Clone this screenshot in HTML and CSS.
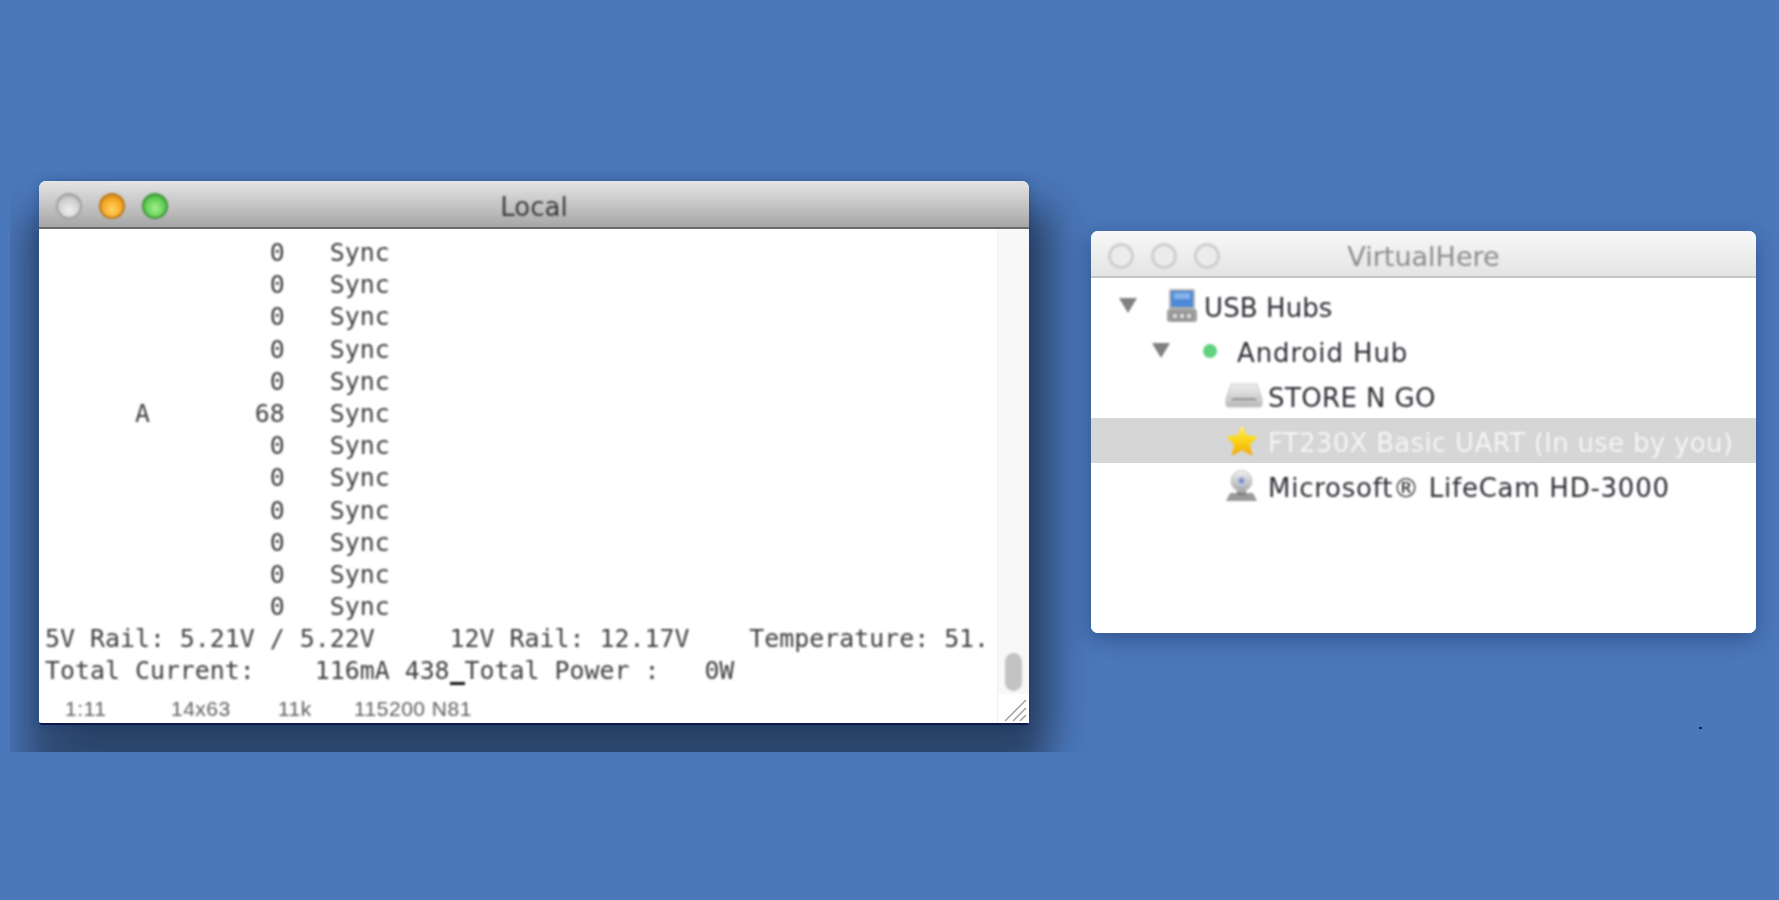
FILE: index.html
```html
<!DOCTYPE html>
<html lang="en">
<head>
<meta charset="utf-8">
<title>Local and VirtualHere</title>
<link rel="stylesheet" href="styles.css">
</head>
<body>
<main class="desktop">
  <div class="shadow-clip">
    <section class="window terminal-window">
      <header class="titlebar titlebar-active">
        <div class="lights">
          <span class="light light-grey"></span>
          <span class="light light-amber"></span>
          <span class="light light-green"></span>
        </div>
        <h1 class="title title-active">Local</h1>
      </header>
      <div class="terminal-body">
        <div class="terminal-main">
          <div class="screen">
            <div class="line">               0   Sync</div>
            <div class="line">               0   Sync</div>
            <div class="line">               0   Sync</div>
            <div class="line">               0   Sync</div>
            <div class="line">               0   Sync</div>
            <div class="line">      A       68   Sync</div>
            <div class="line">               0   Sync</div>
            <div class="line">               0   Sync</div>
            <div class="line">               0   Sync</div>
            <div class="line">               0   Sync</div>
            <div class="line">               0   Sync</div>
            <div class="line">               0   Sync</div>
            <div class="line">5V Rail: 5.21V / 5.22V     12V Rail: 12.17V    Temperature: 51.</div>
            <div class="line">Total Current:    116mA 438<span class="cursor"></span>Total Power :   0W</div>
          </div>
          <div class="status">
            <span class="status-pos">1:11</span>
            <span class="status-size">14x63</span>
            <span class="status-bytes">11k</span>
            <span>115200 N81</span>
          </div>
        </div>
        <aside class="scroll">
          <div class="track"><div class="thumb"></div></div>
          <div class="grip">
            <svg viewBox="0 0 24 24" width="24" height="24"><path d="M2 23 23 2M10 23 23 10M17 23 23 17" stroke="#a8a8a8" stroke-width="1.6" fill="none"/></svg>
          </div>
        </aside>
      </div>
    </section>
  </div>

  <section class="window hub-window">
    <header class="titlebar titlebar-inactive">
      <div class="lights lights-inactive">
        <span class="light light-off"></span>
        <span class="light light-off"></span>
        <span class="light light-off"></span>
      </div>
      <h2 class="title title-inactive">VirtualHere</h2>
    </header>
    <ul class="tree">
      <li class="row row-hubs">
        <svg class="tri" viewBox="0 0 18 15"><polygon points="0,0 18,0 9,15" fill="#808080"/></svg>
        <svg class="ico-hub" viewBox="0 0 32 34">
          <rect x="3" y="0" width="26" height="21" rx="2" fill="#b4b4b4"/>
          <rect x="5" y="2" width="22" height="16" fill="#4f8ad8"/>
          <rect x="8" y="4" width="16" height="6" fill="#84b2ea"/>
          <rect x="1" y="20" width="30" height="13" rx="3" fill="#a0a0a0"/>
          <circle cx="9" cy="27" r="3.4" fill="#d8d8d8" stroke="#666" stroke-width="1"/>
          <circle cx="16" cy="27" r="3.4" fill="#d8d8d8" stroke="#666" stroke-width="1"/>
          <circle cx="23" cy="27" r="3.4" fill="#d8d8d8" stroke="#666" stroke-width="1"/>
        </svg>
        <span class="label label-hubs">USB Hubs</span>
      </li>
      <li class="row row-android">
        <svg class="tri" viewBox="0 0 18 15"><polygon points="0,0 18,0 9,15" fill="#808080"/></svg>
        <span class="dot"></span>
        <span class="label label-android">Android Hub</span>
      </li>
      <li class="row row-device">
        <svg class="ico-drive" viewBox="0 0 38 25">
          <defs><linearGradient id="drive" x1="0" y1="0" x2="0" y2="1"><stop offset="0" stop-color="#f0f0f0"/><stop offset="1" stop-color="#b8b8b8"/></linearGradient></defs>
          <path d="M6 1h26l5 15v6a2 2 0 0 1-2 2H3a2 2 0 0 1-2-2v-6z" fill="url(#drive)" stroke="#c8c8c8"/>
          <rect x="7" y="15" width="24" height="2.4" fill="#9a9a9a"/>
        </svg>
        <span class="label label-store">STORE N GO</span>
      </li>
      <li class="row row-device row-selected">
        <svg class="ico-star" viewBox="0 0 34 33">
          <defs><linearGradient id="star" x1="0" y1="0" x2="0" y2="1"><stop offset="0" stop-color="#fff07a"/><stop offset=".5" stop-color="#fbd414"/><stop offset="1" stop-color="#f0a818"/></linearGradient></defs>
          <polygon points="17,1 22,11 33,12.500 25,20.500 27.500,32 17,26.500 6.500,32 9,20.500 1,12.500 12,11" fill="url(#star)"/>
        </svg>
        <span class="label label-uart">FT230X Basic UART (In use by you)</span>
      </li>
      <li class="row row-device">
        <svg class="ico-cam" viewBox="0 0 33 32">
          <defs><linearGradient id="cam" x1="0" y1="0" x2="0" y2="1"><stop offset="0" stop-color="#f2f2f2"/><stop offset="1" stop-color="#a8a8a8"/></linearGradient></defs>
          <path d="M1 31 5 23h23l4 8z" fill="#9a9a9a"/>
          <rect x="12" y="19" width="9" height="7" fill="#888"/>
          <circle cx="16.500" cy="11" r="10.500" fill="url(#cam)" stroke="#c0c0c0"/>
          <circle cx="16.500" cy="11" r="5" fill="#bcc6e0"/>
          <circle cx="16.500" cy="11" r="2.400" fill="#7488bc"/>
        </svg>
        <span class="label label-cam">Microsoft® LifeCam HD-3000</span>
      </li>
    </ul>
  </section>
  <span class="speck"></span>
</main>
</body>
</html>
```
FILE: styles.css
```css
* { box-sizing: border-box; }
html, body { margin: 0; padding: 0; }
body { width: 1779px; height: 900px; overflow: hidden; background: #4b78bb; }
.desktop { position: relative; width: 1779px; height: 900px; background: #4b78bb; overflow: hidden; }

.shadow-clip { position: absolute; left: 10px; top: 150px; width: 1130px; height: 602px; overflow: hidden; }

.window { position: absolute; display: flex; flex-direction: column; background: #fff; border-radius: 7px 7px 3px 3px; }
.terminal-window {
  left: 29px; top: 31px; width: 990px; height: 544px;
  box-shadow: 0 0 10px rgba(20,50,110,.35), 0 46px 36px 16px rgba(0,0,0,.37), 30px 20px 40px 0 rgba(0,0,0,.18);
  border-bottom: 2px solid #0c1a4a;
}
.hub-window {
  left: 1091px; top: 231px; width: 665px; height: 402px;
  box-shadow: 0 6px 22px rgba(10,30,70,.4);
  border-radius: 7px;
}

.titlebar { position: relative; display: flex; align-items: center; justify-content: center; flex: none; border-radius: 7px 7px 0 0; }
.titlebar-active { height: 48px; background: linear-gradient(#e4e4e4, #c9c9c9 45%, #a6a6a6); border-bottom: 2px solid #6a6a6a; }
.titlebar-inactive { height: 47px; background: linear-gradient(#f8f8f8, #e4e4e4); border-bottom: 2px solid #c6c6c6; }
.title { margin: 0; padding-top: 5px; font: 400 26px/1 "DejaVu Sans", sans-serif; filter: blur(.9px); }
.title-active { color: #3c3c3c; }
.title-inactive { color: #8c8c8c; font-size: 27px; }

.lights { position: absolute; left: 17px; top: 12px; display: flex; gap: 17px; }
.lights-inactive { left: 17px; top: 12px; }
.light { display: block; width: 26px; height: 26px; border-radius: 50%; filter: blur(.8px); }
.light-grey { background: radial-gradient(circle at 50% 70%, #efefef, #cfcfcf 60%, #9a9a9a); border: 2px solid #a0a0a0; }
.light-amber { background: radial-gradient(circle at 50% 65%, #ffd565, #f5a41e 60%, #a96a10); border: 2px solid #b87a1c; }
.light-green { background: radial-gradient(circle at 50% 60%, #a4f08e, #5dcb50 60%, #2f8a2d); border: 2px solid #3f953a; }
.light-off { background: #ececec; border: 3px solid #cfcfcf; }

.terminal-body { flex: 1; display: flex; min-height: 0; }
.terminal-main { flex: 1; min-width: 0; display: flex; flex-direction: column; padding: 8px 0 0 6px; }
.screen {
  width: 960px; color: #3e3e3e;
  font: 400 24.900px/32.200px "DejaVu Sans Mono", monospace;
  filter: blur(1.050px);
}
.line { height: 32.200px; white-space: pre; }
.cursor { display: inline-block; width: 15px; height: 3px; background: #111; vertical-align: -6px; }
.status {
  display: flex; padding: 8px 0 0 20px; color: #5e5e5e; letter-spacing: .5px;
  font: 400 21px/26px "Liberation Sans", sans-serif; filter: blur(1px);
}
.status-pos { width: 106px; }
.status-size { width: 107px; }
.status-bytes { width: 76px; }

.scroll { flex: none; width: 32px; display: flex; flex-direction: column; background: #fdfdfd; border-left: 1px solid #f0f0f0; }
.track { flex: 1; display: flex; flex-direction: column; justify-content: flex-end; align-items: center; background: #f8f8f8; padding-bottom: 3px; }
.thumb { width: 17px; height: 38px; border-radius: 9px; background: #c3c3c3; filter: blur(.8px); }
.grip { flex: none; height: 29px; display: flex; align-items: flex-end; justify-content: flex-end; padding: 0 2px 1px 0; background: #fff; filter: blur(.7px); }

.tree { flex: 1; margin: 0; padding: 5px 0 0; list-style: none; background: #fff; border-radius: 0 0 7px 7px; }
.row {
  height: 45.100px; display: flex; align-items: center; color: #2c2c34;
  font: 400 26px/1 "DejaVu Sans", sans-serif;
}
.label { padding-top: 4px; filter: blur(1px); white-space: nowrap; }
.label-hubs { letter-spacing: .1px; }
.label-android { letter-spacing: .9px; }
.label-store { letter-spacing: .4px; }
.label-uart { letter-spacing: .3px; }
.label-cam { letter-spacing: .75px; }
.tri { width: 18px; height: 15px; flex: none; filter: blur(.9px); }
.row-hubs { padding-left: 28px; }
.row-hubs .tri { margin-right: 29px; }
.ico-hub { width: 32px; height: 34px; flex: none; margin-right: 6px; filter: blur(1.100px); }
.row-android { padding-left: 61px; }
.row-android .tri { margin-right: 33px; }
.dot { width: 14px; height: 14px; flex: none; border-radius: 50%; margin-right: 20px; background: #62d27f; filter: blur(1px); }
.row-device { padding-left: 134px; }
.ico-drive { width: 38px; height: 25px; flex: none; margin-right: 5px; filter: blur(1px); }
.ico-star { width: 34px; height: 33px; flex: none; margin-right: 9px; filter: blur(.9px); }
.ico-cam { width: 33px; height: 32px; flex: none; margin-right: 10px; filter: blur(1px); }
.row-selected { background: #d6d6d6; color: #f4f4f4; }

.speck { position: absolute; left: 1699px; top: 727px; width: 3px; height: 2px; background: #222; }
```
